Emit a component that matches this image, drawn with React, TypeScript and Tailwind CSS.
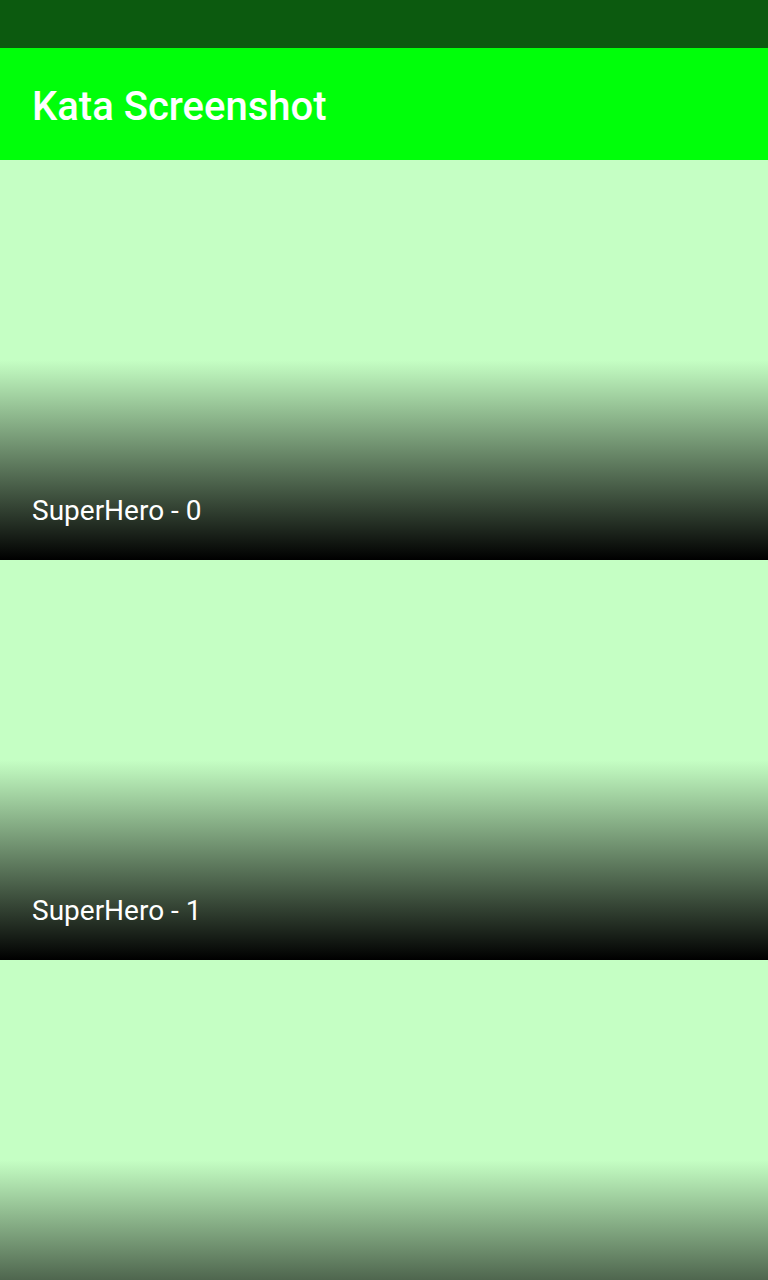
import React from "react";

const heroes = [0, 1, 2];

export default function App() {
  return (
    <div className="w-[768px] h-[1280px] overflow-hidden bg-[#c5ffc4]" style={{ fontFamily: "Roboto, 'Noto Sans', sans-serif" }}>
      <div className="h-[48px] bg-[#0c5a0f]" />
      <div className="h-[112px] bg-[#00ff0a] px-[32px] pt-[39px]">
        <h1 className="text-[40px] leading-[40px] font-medium text-white">Kata Screenshot</h1>
      </div>
      <div className="flex flex-col">
        {heroes.map((i) => (
          <div
            key={i}
            className="h-[400px] shrink-0 flex items-end px-[32px] pb-[35px] bg-[linear-gradient(180deg,#c5ffc4_50%,#000000_100%)]"
          >
            {i < 2 && <span className="text-[28px] leading-[28px] text-white">SuperHero - {i}</span>}
          </div>
        ))}
      </div>
    </div>
  );
}
